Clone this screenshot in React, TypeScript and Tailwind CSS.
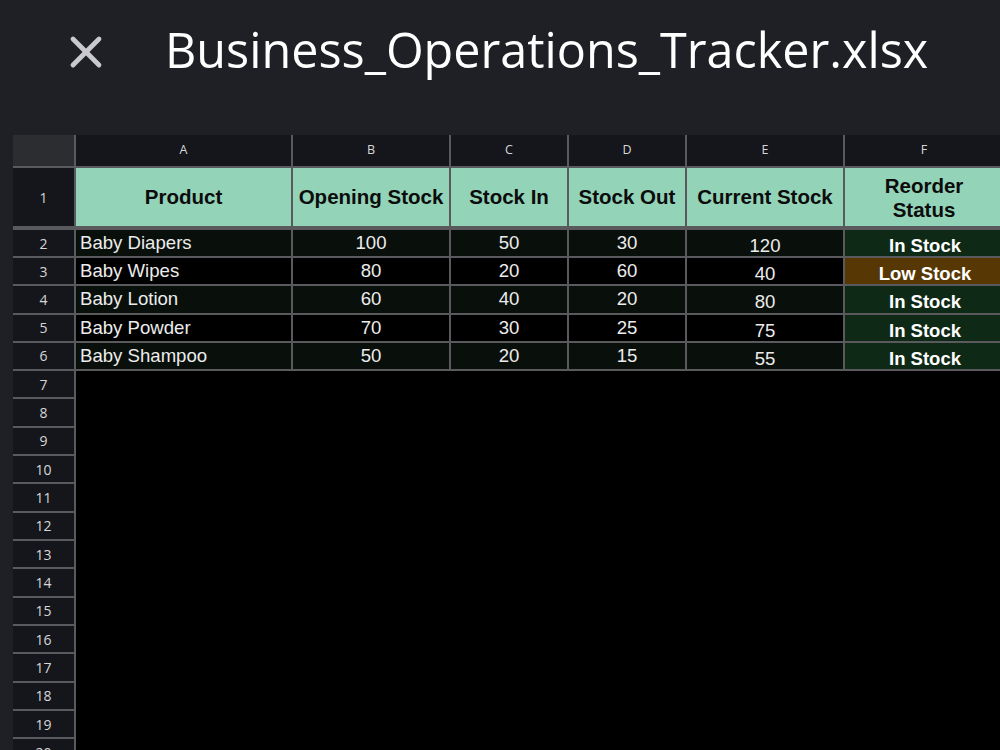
import { X } from "lucide-react";

const cols = [
  { key: "A", w: "w-[217px]" },
  { key: "B", w: "w-[158px]" },
  { key: "C", w: "w-[118px]" },
  { key: "D", w: "w-[118px]" },
  { key: "E", w: "w-[158px]" },
  { key: "F", w: "w-[160px]" },
];

const headers = ["Product", "Opening Stock", "Stock In", "Stock Out", "Current Stock", "Reorder Status"];

const rows = [
  { name: "Baby Diapers", open: 100, inn: 50, out: 30, cur: 120, status: "In Stock" },
  { name: "Baby Wipes", open: 80, inn: 20, out: 60, cur: 40, status: "Low Stock" },
  { name: "Baby Lotion", open: 60, inn: 40, out: 20, cur: 80, status: "In Stock" },
  { name: "Baby Powder", open: 70, inn: 30, out: 25, cur: 75, status: "In Stock" },
  { name: "Baby Shampoo", open: 50, inn: 20, out: 15, cur: 55, status: "In Stock" },
];

const emptyRows = [7, 8, 9, 10, 11, 12, 13, 14, 15, 16, 17, 18, 19, 20];

const cellFont = { fontFamily: '"Liberation Sans", Arial, sans-serif' };
const uiFont = { fontFamily: '"Open Sans", "Noto Sans", sans-serif' };

export default function App() {
  return (
    <div className="h-[750px] w-[1000px] overflow-hidden bg-[#1f2025]">
      {/* title bar */}
      <div className="flex h-[135px] items-start pt-[19px]">
        <X className="ml-[60px] mt-[7px] h-[52px] w-[52px] text-[#c9c9ce]" strokeWidth={2.2} />
        <h1 className="ml-[53px] text-[48.5px] leading-[60px] text-white" style={uiFont}>
          Business_Operations_Tracker.xlsx
        </h1>
      </div>

      <div className="ml-[13px] bg-black">
        {/* column letters */}
        <div className="flex h-[33px] border-b-2 border-[#5a5a5e] bg-[#15161b] text-[12.5px] text-[#d6d6da]" style={uiFont}>
          <div className="w-[63px] shrink-0 border-r-2 border-[#5a5a5e] bg-[#2c2d31]" />
          {cols.map((c) => (
            <div key={c.key} className={`${c.w} flex shrink-0 items-center justify-center border-r-2 border-[#5a5a5e]`}>
              {c.key}
            </div>
          ))}
        </div>

        {/* header row */}
        <div className="flex h-[62px] border-b-[4px] border-[#5a5a5e]">
          <div className="flex w-[63px] shrink-0 items-center justify-center border-r-2 border-[#5a5a5e] bg-[#15161b] text-[14px] text-[#d6d6da]" style={uiFont}>
            1
          </div>
          {cols.map((c, i) => (
            <div
              key={c.key}
              className={`${c.w} flex shrink-0 items-center justify-center border-r-2 border-[#5a5a5e] bg-[#93d3b8] text-center text-[20.5px] font-bold leading-[24px] text-[#0c0c0c]`}
              style={cellFont}
            >
              {i === 5 ? (
                <span className="pt-[2px]">
                  Reorder
                  <br />
                  Status
                </span>
              ) : (
                headers[i]
              )}
            </div>
          ))}
        </div>

        {/* data rows */}
        {rows.map((r, idx) => {
          const even = idx % 2 === 0;
          const bg = even ? "bg-[#090f0a]" : "bg-black";
          const low = r.status === "Low Stock";
          return (
            <div key={r.name} className="flex h-[28.2px] border-b-2 border-[#5a5a5e] text-[18.6px] text-[#ececec]" style={cellFont}>
              <div className="flex w-[63px] shrink-0 items-center justify-center border-r-2 border-[#5a5a5e] bg-[#15161b] text-[14px] text-[#d6d6da]" style={uiFont}>
                {idx + 2}
              </div>
              <div className={`w-[217px] shrink-0 border-r-2 border-[#5a5a5e] pl-[4px] leading-[26px] ${bg}`}>{r.name}</div>
              <div className={`w-[158px] shrink-0 border-r-2 border-[#5a5a5e] text-center leading-[26px] ${bg}`}>{r.open}</div>
              <div className={`w-[118px] shrink-0 border-r-2 border-[#5a5a5e] text-center leading-[26px] ${bg}`}>{r.inn}</div>
              <div className={`w-[118px] shrink-0 border-r-2 border-[#5a5a5e] text-center leading-[26px] ${bg}`}>{r.out}</div>
              <div className={`w-[158px] shrink-0 border-r-2 border-[#5a5a5e] pt-[3px] text-center leading-[26px] ${bg}`}>{r.cur}</div>
              <div
                className={`w-[160px] shrink-0 pt-[3px] text-center text-[18.5px] font-bold leading-[25px] text-white ${low ? "bg-[#573805]" : "bg-[#0e2a16]"}`}
              >
                {r.status}
              </div>
            </div>
          );
        })}

        {/* empty rows */}
        {emptyRows.map((n) => (
          <div key={n} className="flex h-[28.33px]">
            <div className="flex w-[63px] shrink-0 items-center justify-center border-b-2 border-r-2 border-[#5a5a5e] bg-[#15161b] text-[14px] text-[#d6d6da]" style={uiFont}>
              {n}
            </div>
            <div className="flex-1 bg-black" />
          </div>
        ))}
      </div>
    </div>
  );
}
